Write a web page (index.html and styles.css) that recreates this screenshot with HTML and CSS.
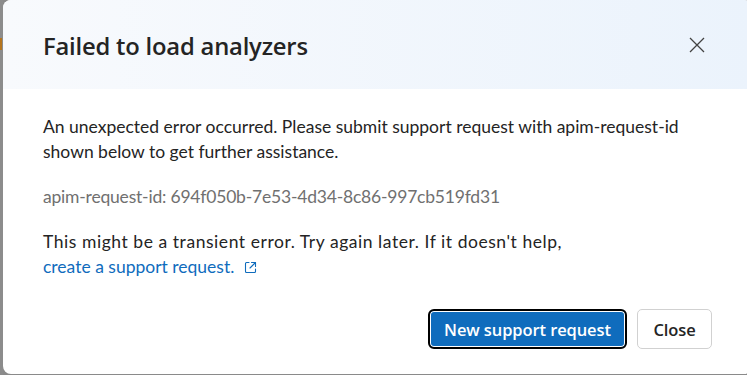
FILE: index.html
```html
<!DOCTYPE html>
<html lang="en">
<head>
<meta charset="utf-8">
<title>Failed to load analyzers</title>
<link rel="stylesheet" href="styles.css">
</head>
<body>
<div class="backdrop">
  <div class="edge"><span class="edge-mark"></span></div>
  <div class="dialog" role="dialog" aria-labelledby="dlg-title">
    <header class="dialog-header">
      <h2 class="dialog-title" id="dlg-title">Failed to load analyzers</h2>
      <button class="icon-close" aria-label="Close">
        <svg width="16" height="16" viewBox="0 0 16 16" aria-hidden="true"><path d="M1 1 L15 15 M15 1 L1 15" stroke="#424242" stroke-width="1.3" fill="none"/></svg>
      </button>
    </header>
    <div class="dialog-body">
      <p class="msg">An unexpected error occurred. Please submit support request with apim-request-id<br>shown below to get further assistance.</p>
      <p class="msg muted">apim-request-id: 694f050b-7e53-4d34-8c86-997cb519fd31</p>
      <p class="msg"><span class="hint-lead">This might be a transient error. Try again later. If it doesn't help,</span><br><a class="link" href="#">create a support request. <svg class="ext" width="13" height="13" viewBox="0 0 13 13" aria-hidden="true"><path d="M5 1.5 H2.5 a1 1 0 0 0 -1 1 V10.5 a1 1 0 0 0 1 1 H10.5 a1 1 0 0 0 1 -1 V8 M7.5 1.5 H11.5 V5.5 M11.5 1.5 L6 7" stroke="currentColor" stroke-width="1.1" fill="none" stroke-linecap="round" stroke-linejoin="round"/></svg></a></p>
    </div>
    <footer class="dialog-actions">
      <button class="btn btn-primary">New support request</button>
      <button class="btn btn-secondary">Close</button>
    </footer>
  </div>
</div>
</body>
</html>
```
FILE: styles.css
```css
html, body {
  margin: 0;
  padding: 0;
  overflow: hidden;
  background: #8a8a8a;
}
.backdrop {
  display: flex;
  width: 752px;
  height: 375px;
  font-family: "Open Sans", "Noto Sans", sans-serif;
  color: #242424;
}
.edge {
  width: 3px;
  flex: none;
  background: #8c8c8c;
  display: flex;
  flex-direction: column;
  padding-top: 38px;
  box-sizing: border-box;
}
.edge-mark {
  display: block;
  width: 2px;
  height: 12px;
  background: #b5751f;
}
.dialog {
  flex: none;
  width: 749px;
  height: 374px;
  background: #ffffff;
  border-radius: 8px;
  overflow: hidden;
  display: flex;
  flex-direction: column;
}
.dialog-header {
  height: 89px;
  flex: none;
  box-sizing: border-box;
  padding: 0 40px;
  display: flex;
  align-items: center;
  justify-content: space-between;
  background: linear-gradient(90deg, #f8fafd 0%, #ebf3fc 100%);
}
.dialog-title {
  margin: 0;
  font-size: 23.8px;
  font-weight: 600;
  letter-spacing: -0.2px;
  color: #242424;
  padding-top: 2px;
}
.icon-close {
  width: 30px;
  height: 30px;
  padding: 0;
  border: none;
  background: transparent;
  display: flex;
  align-items: center;
  justify-content: center;
}
.dialog-body {
  flex: 1;
  padding: 25px 40px 0;
  font-family: "Lato", "Open Sans", sans-serif;
}
.msg {
  margin: 0 0 20px;
  font-size: 17.5px;
  line-height: 25px;
}
.muted {
  color: #707070;
  letter-spacing: -0.2px;
}
.hint-lead {
  letter-spacing: 0.55px;
}
.link {
  color: #0f6cbd;
  text-decoration: none;
}
.ext {
  vertical-align: -1px;
  margin-left: 5px;
}
.dialog-actions {
  flex: none;
  display: flex;
  justify-content: flex-end;
  gap: 10px;
  padding: 0 40px 25px;
}
.btn {
  height: 40px;
  box-sizing: border-box;
  border-radius: 5px;
  font-family: inherit;
  font-size: 16.5px;
  font-weight: 600;
  letter-spacing: -0.1px;
  padding: 0 12px;
}
.btn-primary {
  width: 199px;
  background: #0f6cbd;
  color: #ffffff;
  border: 2px solid #000000;
  box-shadow: inset 0 0 0 1px #ffffff;
  border-radius: 6px;
}
.btn-secondary {
  width: 75px;
  background: #ffffff;
  color: #242424;
  border: 1px solid #d1d1d1;
}
```
